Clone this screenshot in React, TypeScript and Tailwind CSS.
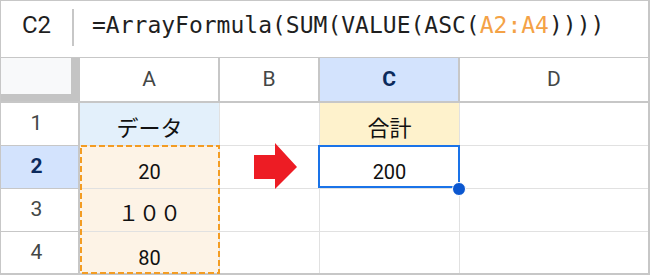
import React from "react";

const roboto = { fontFamily: "Roboto, 'Noto Sans CJK JP', sans-serif" };

function ColHeader({ label, w, active }: { label: string; w: string; active?: boolean }) {
  return (
    <div
      className={`${w} h-full flex items-center justify-center border-r-2 border-[#c7c7c7] text-[21px] ${
        active ? "bg-[#d3e3fd] text-[#0b2a5c] font-bold" : "bg-white text-[#444746]"
      }`}
    >
      {label}
    </div>
  );
}

function RowHeader({ n, active, last }: { n: string; active?: boolean; last?: boolean }) {
  return (
    <div
      className={`w-[79px] h-full flex items-center justify-center pr-[6px] border-r-2 border-[#c7c7c7] text-[21px] ${
        last ? "" : "border-b"
      } ${active ? "bg-[#d3e3fd] text-[#0b2a5c] font-bold" : "bg-white text-[#444746]"}`}
    >
      {n}
    </div>
  );
}

export default function App() {
  return (
    <div className="relative w-[652px] h-[277px] bg-white" style={roboto}>
      <div className="w-[650px] h-[275px] border-t border-l border-r-2 border-b-2 border-[#c7c7c7] flex flex-col">
        {/* formula bar */}
        <div className="h-[57px] border-b border-[#c7c7c7] flex items-start shrink-0">
          <div className="w-[71px] pt-[10px] leading-[28px] text-[24px] text-[#1f1f1f] text-center">C2</div>
          <div className="mt-[8px] h-[37px] w-[2px] bg-[#c7c7c7]" />
          <div
            className="ml-[18px] pt-[10px] leading-[28px] text-[23px] text-[#1f1f1f] whitespace-nowrap"
            style={{ fontFamily: "'DejaVu Sans Mono', monospace" }}
          >
            =ArrayFormula(SUM(VALUE(ASC(<span className="text-[#f4a246]">A2:A4</span>))))
          </div>
        </div>
        {/* column header row */}
        <div className="h-[45px] flex border-b-2 border-[#c7c7c7] shrink-0">
          <div className="w-[79px] h-full border-r-[9px] border-b-[7px] border-[#c4c4c4] bg-[#f8f9fa]" />
          <ColHeader label="A" w="w-[140px]" />
          <ColHeader label="B" w="w-[100px]" />
          <ColHeader label="C" w="w-[140px]" active />
          <div className="w-[188px] h-full flex items-center justify-center text-[21px] text-[#444746]">D</div>
        </div>
        {/* row 1 */}
        <div className="h-[43px] flex shrink-0">
          <RowHeader n="1" />
          <div className="w-[140px] h-full border-r border-b border-[#e1e1e1] bg-[#e3f0fb] flex items-end justify-center pb-[7px]">
            <span className="text-[22px] leading-[24px] text-[#111]" style={{ fontFamily: "'Noto Sans CJK JP', sans-serif" }}>
              データ
            </span>
          </div>
          <div className="w-[100px] h-full border-r border-b border-[#e1e1e1]" />
          <div className="w-[140px] h-full border-r border-b border-[#e1e1e1] bg-[#fef2cc] flex items-end justify-center pb-[7px]">
            <span className="text-[22px] leading-[24px] text-[#111]" style={{ fontFamily: "'Noto Sans CJK JP', sans-serif" }}>
              合計
            </span>
          </div>
          <div className="w-[188px] h-full border-b border-[#e1e1e1]" />
        </div>
        {/* row 2 */}
        <div className="h-[43px] flex shrink-0">
          <RowHeader n="2" active />
          <div className="w-[140px] h-full border-r border-b border-[#e1e1e1] bg-[#fdf3e6] flex items-end justify-center pb-[4px]">
            <span className="text-[20px] leading-[24px] text-[#111]">20</span>
          </div>
          <div className="w-[100px] h-full border-r border-b border-[#e1e1e1]" />
          <div className="w-[140px] h-full border-r border-b border-[#e1e1e1] flex items-end justify-center pb-[4px]">
            <span className="text-[20px] leading-[24px] text-[#111]">200</span>
          </div>
          <div className="w-[188px] h-full border-b border-[#e1e1e1]" />
        </div>
        {/* row 3 */}
        <div className="h-[43px] flex shrink-0">
          <RowHeader n="3" />
          <div className="w-[140px] h-full border-r border-b border-[#e1e1e1] bg-[#fdf3e6] flex items-end justify-center pb-[7px]">
            <span className="text-[21px] leading-[24px] text-[#111]" style={{ fontFamily: "'Noto Sans CJK JP', sans-serif" }}>
              １００
            </span>
          </div>
          <div className="w-[100px] h-full border-r border-b border-[#e1e1e1]" />
          <div className="w-[140px] h-full border-r border-b border-[#e1e1e1]" />
          <div className="w-[188px] h-full border-b border-[#e1e1e1]" />
        </div>
        {/* row 4 */}
        <div className="h-[41px] flex shrink-0">
          <RowHeader n="4" last />
          <div className="w-[140px] h-full border-r border-[#e1e1e1] bg-[#fdf3e6] flex items-end justify-center pb-[3px]">
            <span className="text-[20px] leading-[24px] text-[#111]">80</span>
          </div>
          <div className="w-[100px] h-full border-r border-[#e1e1e1]" />
          <div className="w-[140px] h-full border-r border-[#e1e1e1]" />
          <div className="w-[188px] h-full" />
        </div>
      </div>

      {/* copy range (dashed) */}
      <svg className="absolute left-[80px] top-[145px]" width="140" height="129">
        <rect x="1" y="1" width="138" height="127" fill="none" stroke="#f39c23" strokeWidth="2" strokeDasharray="6 3" />
      </svg>

      {/* red arrow */}
      <svg className="absolute left-[254px] top-[143px]" width="44" height="47">
        <polygon points="0,12 21,12 21,0 43,24 21,46 21,36 0,36" fill="#ed1c24" />
      </svg>

      {/* active cell */}
      <div className="absolute left-[318px] top-[145px] w-[142px] h-[43px] border-2 border-[#1a73e8]" />
      <div className="absolute left-[452px] top-[182px] w-[14px] h-[14px] rounded-full bg-[#0b57d0] border border-white" />
    </div>
  );
}
